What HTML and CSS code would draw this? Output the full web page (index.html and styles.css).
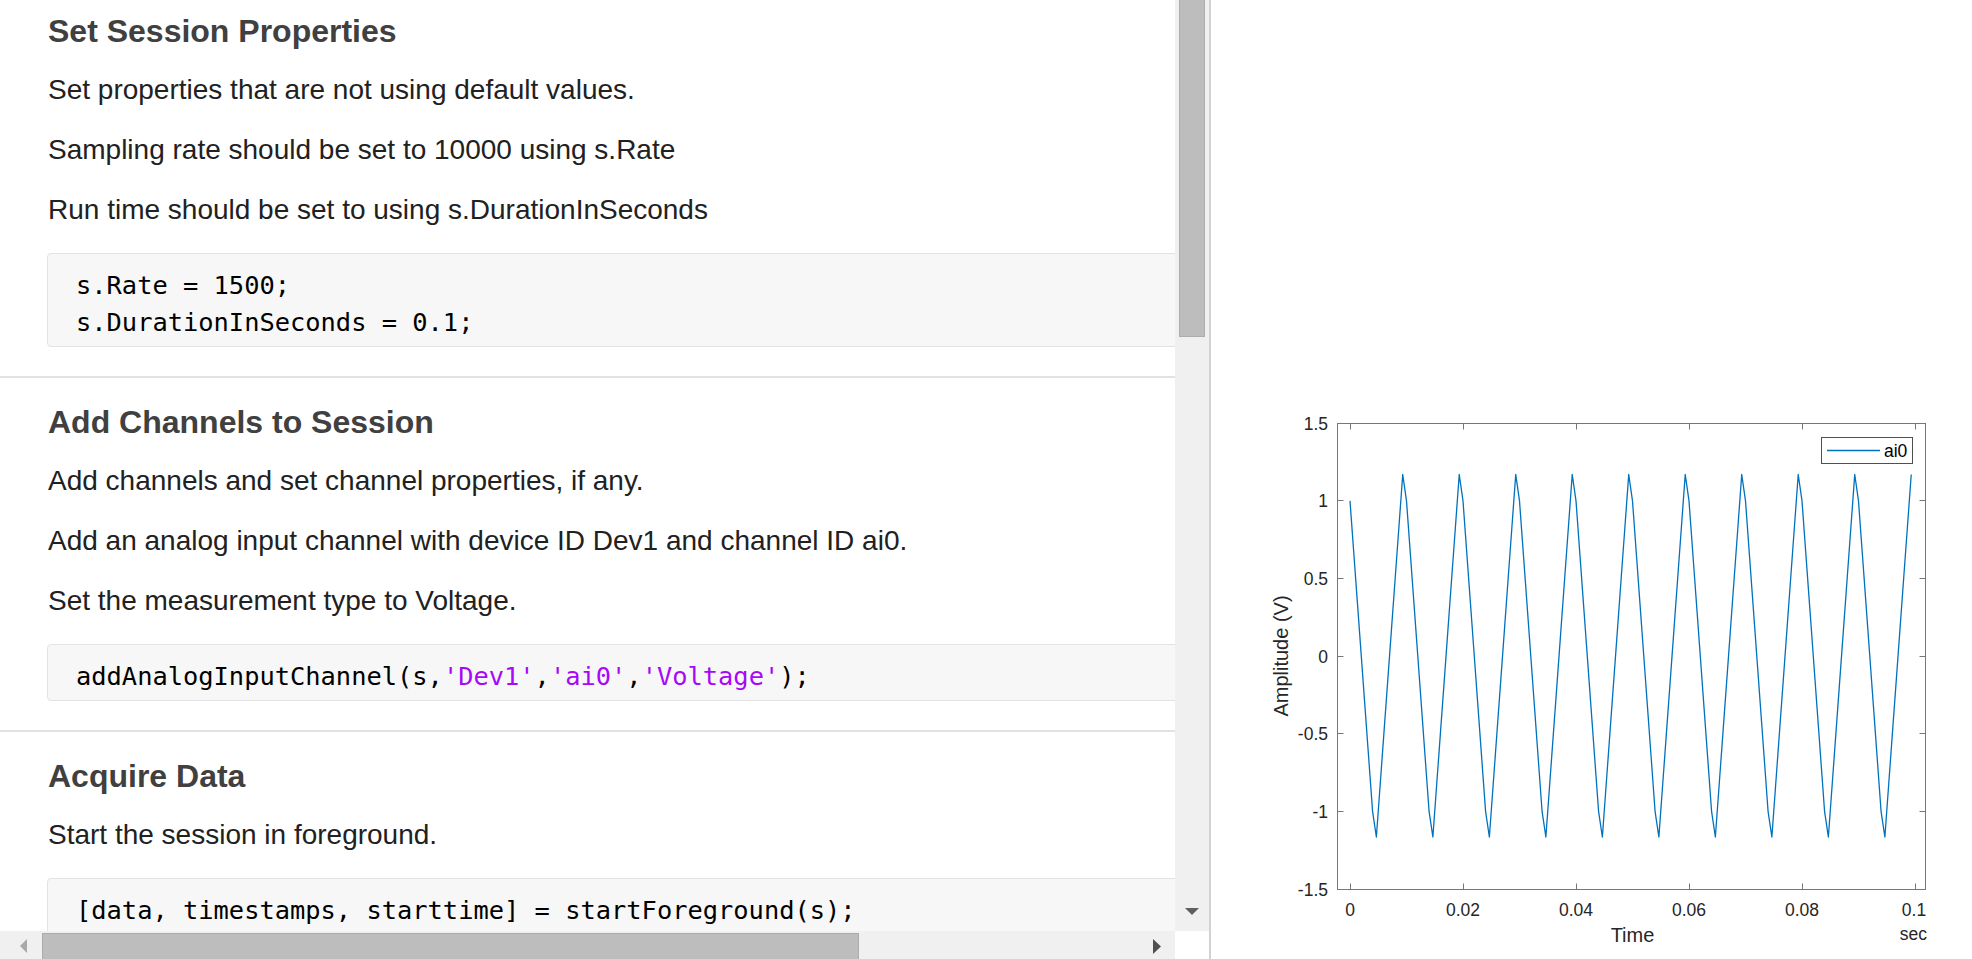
FILE: index.html
```html
<!DOCTYPE html>
<html>
<head>
<meta charset="utf-8">
<title>Live Script</title>
<link rel="stylesheet" href="styles.css">
</head>
<body>
<div class="app">
  <div class="editor">
    <div class="viewport">
      <div class="doc">
        <section class="sec first">
          <h2 class="h">Set Session Properties</h2>
          <p class="t">Set properties that are not using default values.</p>
          <p class="t">Sampling rate should be set to 10000 using s.Rate</p>
          <p class="t">Run time should be set to using s.DurationInSeconds</p>
          <pre class="code">s.Rate = 1500;
s.DurationInSeconds = 0.1;</pre>
        </section>
        <section class="sec">
          <h2 class="h">Add Channels to Session</h2>
          <p class="t">Add channels and set channel properties, if any.</p>
          <p class="t">Add an analog input channel with device ID Dev1 and channel ID ai0.</p>
          <p class="t">Set the measurement type to Voltage.</p>
          <pre class="code">addAnalogInputChannel(s,<span class="str">'Dev1'</span>,<span class="str">'ai0'</span>,<span class="str">'Voltage'</span>);</pre>
        </section>
        <section class="sec last">
          <h2 class="h">Acquire Data</h2>
          <p class="t">Start the session in foreground.</p>
          <pre class="code">[data, timestamps, starttime] = startForeground(s);</pre>
        </section>
      </div>
    </div>
    <div class="vscroll">
      <div class="vthumb"></div>
      <div class="vspace"></div>
      <div class="varrow">
        <svg width="14" height="7" viewBox="0 0 14 7"><polygon points="0,0 14,0 7,7" fill="#606060"/></svg>
      </div>
    </div>
    <div class="hscroll">
      <div class="harrow left">
        <svg width="7" height="14" viewBox="0 0 7 14"><polygon points="7,0 7,14 0,7" fill="#a8a8a8"/></svg>
      </div>
      <div class="hthumb"></div>
      <div class="hspace"></div>
      <div class="harrow right">
        <svg width="8" height="15" viewBox="0 0 8 15"><polygon points="0,0 0,15 8,7.5" fill="#505050"/></svg>
      </div>
    </div>
    <div class="corner"></div>
  </div>
  <div class="divider"></div>
  <div class="figure">
    <svg class="plot" width="761" height="959" viewBox="0 0 761 959">
      <defs>
        <polyline id="per" fill="none" stroke="#0072BD" stroke-width="1.3" stroke-linejoin="round"
          points="139,500.9 142.77,552.7 146.53,604.4 150.3,656.3 154.07,708.1 157.83,759.8 161.6,811.7 165.37,837 169.13,785.3 172.9,733.4 176.67,681.6 180.43,629.9 184.2,578 187.97,526.2 191.73,474.5 195.5,500.9"/>
        <polyline id="perlast" fill="none" stroke="#0072BD" stroke-width="1.3" stroke-linejoin="round"
          points="139,500.9 142.77,552.7 146.53,604.4 150.3,656.3 154.07,708.1 157.83,759.8 161.6,811.7 165.37,837 169.13,785.3 172.9,733.4 176.67,681.6 180.43,629.9 184.2,578 187.97,526.2 191.73,474.5"/>
      </defs>
      <rect x="126.5" y="423.5" width="588" height="466" fill="#fff" stroke="#777777" stroke-width="1"/>
      <g stroke="#777777" stroke-width="1">
        <path d="M139.5 889.5v-6M252.5 889.5v-6M365.5 889.5v-6M478.5 889.5v-6M591.5 889.5v-6M704.5 889.5v-6"/>
        <path d="M139.5 423.5v6M252.5 423.5v6M365.5 423.5v6M478.5 423.5v6M591.5 423.5v6M704.5 423.5v6"/>
        <path d="M126.5 500.5h6M126.5 578.5h6M126.5 656.5h6M126.5 733.5h6M126.5 811.5h6"/>
        <path d="M714.5 500.5h-6M714.5 578.5h-6M714.5 656.5h-6M714.5 733.5h-6M714.5 811.5h-6"/>
      </g>
      <use href="#per" x="0"/>
      <use href="#per" x="56.5"/>
      <use href="#per" x="113"/>
      <use href="#per" x="169.5"/>
      <use href="#per" x="226"/>
      <use href="#per" x="282.5"/>
      <use href="#per" x="339"/>
      <use href="#per" x="395.5"/>
      <use href="#per" x="452"/>
      <use href="#perlast" x="508.5"/>
      <g class="ticklabels">
        <text x="117" y="429.5" text-anchor="end">1.5</text>
        <text x="117" y="507" text-anchor="end">1</text>
        <text x="117" y="584.5" text-anchor="end">0.5</text>
        <text x="117" y="662.5" text-anchor="end">0</text>
        <text x="117" y="740" text-anchor="end">-0.5</text>
        <text x="117" y="817.5" text-anchor="end">-1</text>
        <text x="117" y="895.5" text-anchor="end">-1.5</text>
        <text x="139" y="916" text-anchor="middle">0</text>
        <text x="252" y="916" text-anchor="middle">0.02</text>
        <text x="365" y="916" text-anchor="middle">0.04</text>
        <text x="478" y="916" text-anchor="middle">0.06</text>
        <text x="591" y="916" text-anchor="middle">0.08</text>
        <text x="703" y="916" text-anchor="middle">0.1</text>
        <text x="716" y="940" text-anchor="end">sec</text>
      </g>
      <text class="axlabel" x="421.5" y="942" text-anchor="middle">Time</text>
      <text class="axlabel" transform="translate(77 656) rotate(-90)" text-anchor="middle">Amplitude (V)</text>
      <rect x="610.5" y="437.5" width="91" height="26" fill="#fff" stroke="#505050" stroke-width="1"/>
      <line x1="616" y1="450.5" x2="669" y2="450.5" stroke="#0072BD" stroke-width="1.3"/>
      <text class="legend" x="673" y="457">ai0</text>
    </svg>
  </div>
</div>
</body>
</html>
```

FILE: styles.css
```css
* {
  box-sizing: border-box;
}

html,
body {
  margin: 0;
  padding: 0;
}

body {
  width: 1972px;
  height: 959px;
  overflow: hidden;
  background: #ffffff;
  font-family: "Liberation Sans", Arial, sans-serif;
}

.app {
  display: flex;
  height: 959px;
}

.editor {
  display: grid;
  grid-template-columns: 1175px 34px;
  grid-template-rows: 931px 28px;
}

.viewport {
  overflow: hidden;
  background: #ffffff;
}

.doc {
  width: 1590px;
}

.sec {
  display: flex;
  flex-direction: column;
  gap: 24px;
  padding: 28px 30px 29px 48px;
  border-bottom: 2px solid #e2e2e2;
}

.sec.first {
  padding-top: 15px;
}

.sec.last {
  border-bottom: none;
}

.h {
  margin: 0;
  font-size: 32px;
  line-height: 32px;
  font-weight: bold;
  color: #404040;
}

.t {
  margin: 0;
  font-size: 28px;
  line-height: 36px;
  color: #212121;
  position: relative;
  top: 1px;
}

.code {
  margin: 2px 0 0 -1px;
  padding: 13px 0 5px 28px;
  background: #f7f7f7;
  border: 1px solid #e3e3e3;
  border-radius: 4px;
  font-family: "DejaVu Sans Mono", "Liberation Mono", monospace;
  font-size: 25.4px;
  line-height: 37px;
  color: #000000;
  white-space: pre;
}

.str {
  color: #a709f5;
}

.vscroll {
  background: #f0f0f0;
  display: flex;
  flex-direction: column;
  align-items: center;
}

.vthumb {
  width: 26px;
  height: 337px;
  background: #bdbdbd;
  border: 1px solid #acacac;
  border-top: none;
}

.vspace {
  flex: 1;
}

.varrow {
  height: 40px;
  display: flex;
  align-items: center;
  justify-content: center;
}

.varrow svg,
.harrow svg {
  display: block;
}

.hscroll {
  background: #f0f0f0;
  display: flex;
  align-items: flex-start;
  padding-top: 2px;
}

.harrow {
  height: 26px;
  display: flex;
  align-items: center;
  justify-content: center;
}

.harrow.left {
  width: 42px;
  padding-left: 4px;
}

.harrow.right {
  width: 36px;
}

.hthumb {
  width: 817px;
  height: 26px;
  background: #bdbdbd;
  border: 1px solid #acacac;
  border-bottom: none;
}

.hspace {
  flex: 1;
}

.corner {
  background: #ffffff;
}

.divider {
  width: 2px;
  background: #d2d2d2;
}

.figure {
  flex: 1;
  background: #ffffff;
}

.plot {
  display: block;
}

.ticklabels text {
  font-family: "Liberation Sans", Arial, sans-serif;
  font-size: 17.5px;
  fill: #262626;
}

.axlabel {
  font-family: "Liberation Sans", Arial, sans-serif;
  font-size: 20px;
  fill: #262626;
}

.legend {
  font-family: "Liberation Sans", Arial, sans-serif;
  font-size: 17.5px;
  fill: #000000;
}
```
